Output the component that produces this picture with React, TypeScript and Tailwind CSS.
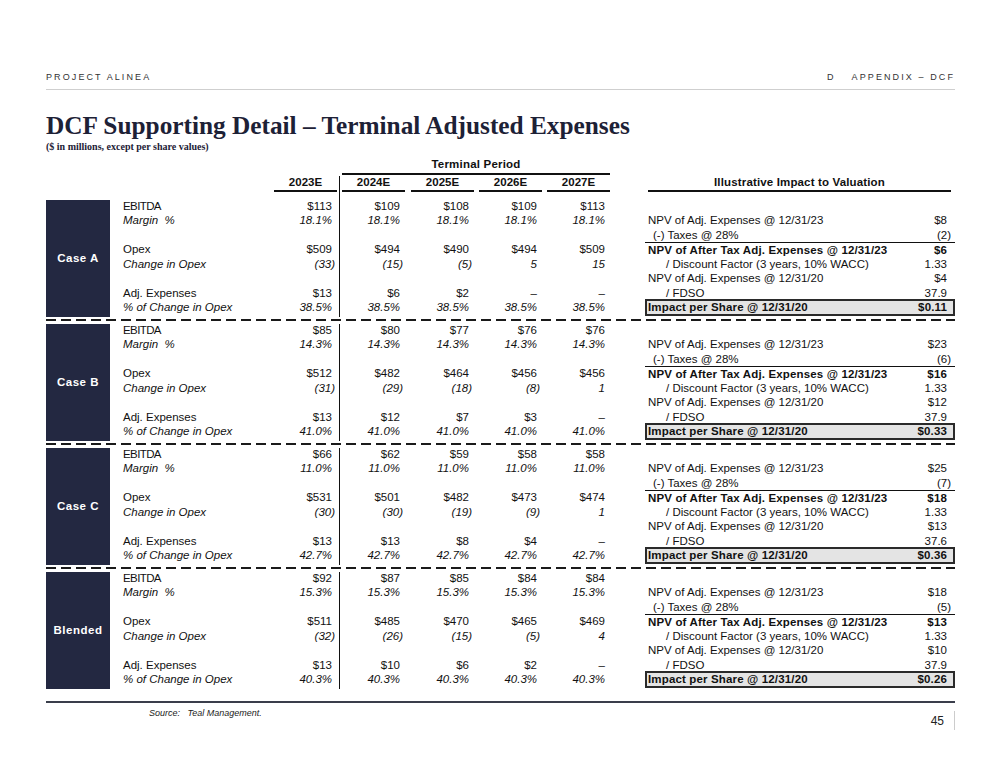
import React from "react"

type CaseData = {
  name: string
  ebitda: string[]
  margin: string[]
  opex: string[]
  change: string[]
  adj: string[]
  pct: string[]
  impact: string[]
}

const years = ["2023E", "2024E", "2025E", "2026E", "2027E"]

const cases: CaseData[] = [
  {
    name: "Case A",
    ebitda: ["$113", "$109", "$108", "$109", "$113"],
    margin: ["18.1%", "18.1%", "18.1%", "18.1%", "18.1%"],
    opex: ["$509", "$494", "$490", "$494", "$509"],
    change: ["(33)", "(15)", "(5)", "5", "15"],
    adj: ["$13", "$6", "$2", "–", "–"],
    pct: ["38.5%", "38.5%", "38.5%", "38.5%", "38.5%"],
    impact: ["$8", "(2)", "$6", "1.33", "$4", "37.9", "$0.11"],
  },
  {
    name: "Case B",
    ebitda: ["$85", "$80", "$77", "$76", "$76"],
    margin: ["14.3%", "14.3%", "14.3%", "14.3%", "14.3%"],
    opex: ["$512", "$482", "$464", "$456", "$456"],
    change: ["(31)", "(29)", "(18)", "(8)", "1"],
    adj: ["$13", "$12", "$7", "$3", "–"],
    pct: ["41.0%", "41.0%", "41.0%", "41.0%", "41.0%"],
    impact: ["$23", "(6)", "$16", "1.33", "$12", "37.9", "$0.33"],
  },
  {
    name: "Case C",
    ebitda: ["$66", "$62", "$59", "$58", "$58"],
    margin: ["11.0%", "11.0%", "11.0%", "11.0%", "11.0%"],
    opex: ["$531", "$501", "$482", "$473", "$474"],
    change: ["(30)", "(30)", "(19)", "(9)", "1"],
    adj: ["$13", "$13", "$8", "$4", "–"],
    pct: ["42.7%", "42.7%", "42.7%", "42.7%", "42.7%"],
    impact: ["$25", "(7)", "$18", "1.33", "$13", "37.6", "$0.36"],
  },
  {
    name: "Blended",
    ebitda: ["$92", "$87", "$85", "$84", "$84"],
    margin: ["15.3%", "15.3%", "15.3%", "15.3%", "15.3%"],
    opex: ["$511", "$485", "$470", "$465", "$469"],
    change: ["(32)", "(26)", "(15)", "(5)", "4"],
    adj: ["$13", "$10", "$6", "$2", "–"],
    pct: ["40.3%", "40.3%", "40.3%", "40.3%", "40.3%"],
    impact: ["$18", "(5)", "$13", "1.33", "$10", "37.9", "$0.26"],
  },
]

const rowH = "h-[14.5px] leading-[14.5px] whitespace-pre"
// left margins for the five year columns
const colMargins = ["", "", "ml-[6px]", "ml-[5px]", "ml-[5px]"]

function Divider({ className = "" }: { className?: string }) {
  return (
    <div className={`w-[5px] flex justify-center ${className}`}>
      <div className="w-px bg-[#111]" />
    </div>
  )
}

type Row = { label: string; vals: string[]; italic?: boolean; tight?: boolean } | null

function ValueCol({ rows, idx }: { rows: Row[]; idx: number }) {
  return (
    <div className={`w-[63px] -mt-[1.5px] ${colMargins[idx]}`}>
      {rows.map((r, i) => {
        const v = r ? r.vals[idx] : ""
        const paren = v.endsWith(")")
        return (
          <div key={i} className={`${rowH} text-right ${paren ? "pr-[2px]" : "pr-[5px]"} ${r?.italic ? "italic" : ""}`}>
            {v}
          </div>
        )
      })}
    </div>
  )
}

function ImpRow({ label, v, indent = "pl-[3px]", bold, topLine }: { label: string; v: string; indent?: string; bold?: boolean; topLine?: boolean }) {
  const paren = v.endsWith(")")
  return (
    <div
      className={`${rowH} flex justify-between ${bold ? "font-bold tracking-[0.15px]" : ""} ${
        topLine ? "border-t border-[#111] leading-[13.5px]" : ""
      }`}
    >
      <span className={indent}>{label}</span>
      <span className={paren ? "pr-[4px]" : "pr-[8px]"}>{v}</span>
    </div>
  )
}

function CaseBlock({ c }: { c: CaseData }) {
  const rows: Row[] = [
    { label: "EBITDA", vals: c.ebitda, tight: true },
    { label: "Margin  %", vals: c.margin, italic: true },
    null,
    { label: "Opex", vals: c.opex },
    { label: "Change in Opex", vals: c.change, italic: true },
    null,
    { label: "Adj. Expenses", vals: c.adj },
    { label: "% of Change in Opex", vals: c.pct, italic: true },
  ]
  return (
    <div className="flex h-[117px]">
      <div className="w-[64px] bg-[#232841] flex items-center justify-center text-white font-bold tracking-[0.5px]">
        {c.name}
      </div>
      <div className="w-[164px] pl-[13px] -mt-[1.5px]">
        {rows.map((r, i) => (
          <div
            key={i}
            className={`${rowH} ${r?.italic ? "italic" : ""} ${r?.tight ? "tracking-[-0.6px]" : ""}`}
          >
            {r?.label}
          </div>
        ))}
      </div>
      <ValueCol rows={rows} idx={0} />
      <Divider />
      <ValueCol rows={rows} idx={1} />
      <ValueCol rows={rows} idx={2} />
      <ValueCol rows={rows} idx={3} />
      <ValueCol rows={rows} idx={4} />
      <div className="ml-[35px] w-[310px] -mt-[1.5px]">
        <div className={rowH} />
        <ImpRow label="NPV of Adj. Expenses @ 12/31/23" v={c.impact[0]} />
        <ImpRow label="(-) Taxes @ 28%" v={c.impact[1]} indent="pl-[8px]" />
        <ImpRow label="NPV of After Tax Adj. Expenses @ 12/31/23" v={c.impact[2]} bold topLine />
        <ImpRow label="/ Discount Factor (3 years, 10% WACC)" v={c.impact[3]} indent="pl-[21px]" />
        <ImpRow label="NPV of Adj. Expenses @ 12/31/20" v={c.impact[4]} />
        <ImpRow label="/ FDSO" v={c.impact[5]} indent="pl-[21px]" />
        <div className="h-[17px] -mt-[1px] border-2 border-[#2a2a2a] bg-[#e4e4e4] flex items-center justify-between font-bold tracking-[0.15px] leading-[13px]">
          <span className="pl-[1px]">Impact per Share @ 12/31/20</span>
          <span className="pr-[6px]">{c.impact[6]}</span>
        </div>
      </div>
    </div>
  )
}

function Dashed() {
  return (
    <div className="pt-[2px] pb-[3px]">
      <div className="h-[2px] bg-[repeating-linear-gradient(90deg,#1a1a1a_0px,#1a1a1a_10px,transparent_10px,transparent_15px)]" />
    </div>
  )
}

export default function App() {
  return (
    <div className="w-[1000px] h-[771px] bg-white overflow-hidden pl-[46px] pr-[45px] font-['Liberation_Sans',Arial,sans-serif] text-[#111]">
      {/* top header */}
      <div className="pt-[71px]">
        <div className="h-[19px] border-b border-[#cfcfcf] flex justify-between text-[9px] leading-[12px] tracking-[2.1px] text-[#333]">
          <span>PROJECT ALINEA</span>
          <span className="flex">
            <span className="mr-[16px]">D</span>
            <span>APPENDIX – DCF</span>
          </span>
        </div>
      </div>

      <h1 className="mt-[23px] font-['Liberation_Serif',serif] font-bold text-[25.3px] leading-[25px] text-[#1d2136]">
        DCF Supporting Detail – Terminal Adjusted Expenses
      </h1>
      <div className="mt-[3px] font-['Liberation_Serif',serif] font-bold text-[10px] leading-[12px] text-[#1d2136]">
        ($ in millions, except per share values)
      </div>

      <div className="text-[11.5px]">
        {/* terminal period */}
        <div className="mt-[4px] ml-[296px] w-[268px] h-[18px] border-b-2 border-[#111] text-center font-bold leading-[14px] tracking-[0.2px]">
          Terminal Period
        </div>

        {/* year header row */}
        <div className="flex h-[25px]">
          <div className="w-[228px]" />
          <div className="w-[63px] h-[17px] border-b-2 border-[#111] text-center font-bold leading-[14px]">{years[0]}</div>
          <Divider className="pt-[1px]" />
          {years.slice(1).map((y, i) => (
            <div key={y} className={`w-[63px] h-[17px] border-b-2 border-[#111] text-center font-bold leading-[14px] ${colMargins[i + 1]}`}>
              {y}
            </div>
          ))}
          <div className="ml-[35px] w-[310px] pl-[3px] pr-[4px]">
            <div className="h-[17px] border-b-2 border-[#111] text-center font-bold leading-[14px] tracking-[0.15px]">
              Illustrative Impact to Valuation
            </div>
          </div>
        </div>

        {cases.map((c, i) => (
          <React.Fragment key={c.name}>
            <CaseBlock c={c} />
            {i < cases.length - 1 && <Dashed />}
          </React.Fragment>
        ))}
      </div>

      {/* bottom rule and footer */}
      <div className="mt-[12px] h-[2px] bg-[#3a3e4b]" />
      <div className="mt-[3px] flex justify-between">
        <div className="pl-[103px] text-[9px] leading-[14px] italic text-[#222] whitespace-pre">Source:   Teal Management.</div>
        <div className="flex">
          <span className="mt-[8px] text-[12px] leading-[14px] text-[#222]">45</span>
          <div className="ml-[10px] mt-[5px] w-px h-[19px] bg-[#cccccc]" />
        </div>
      </div>
    </div>
  )
}
